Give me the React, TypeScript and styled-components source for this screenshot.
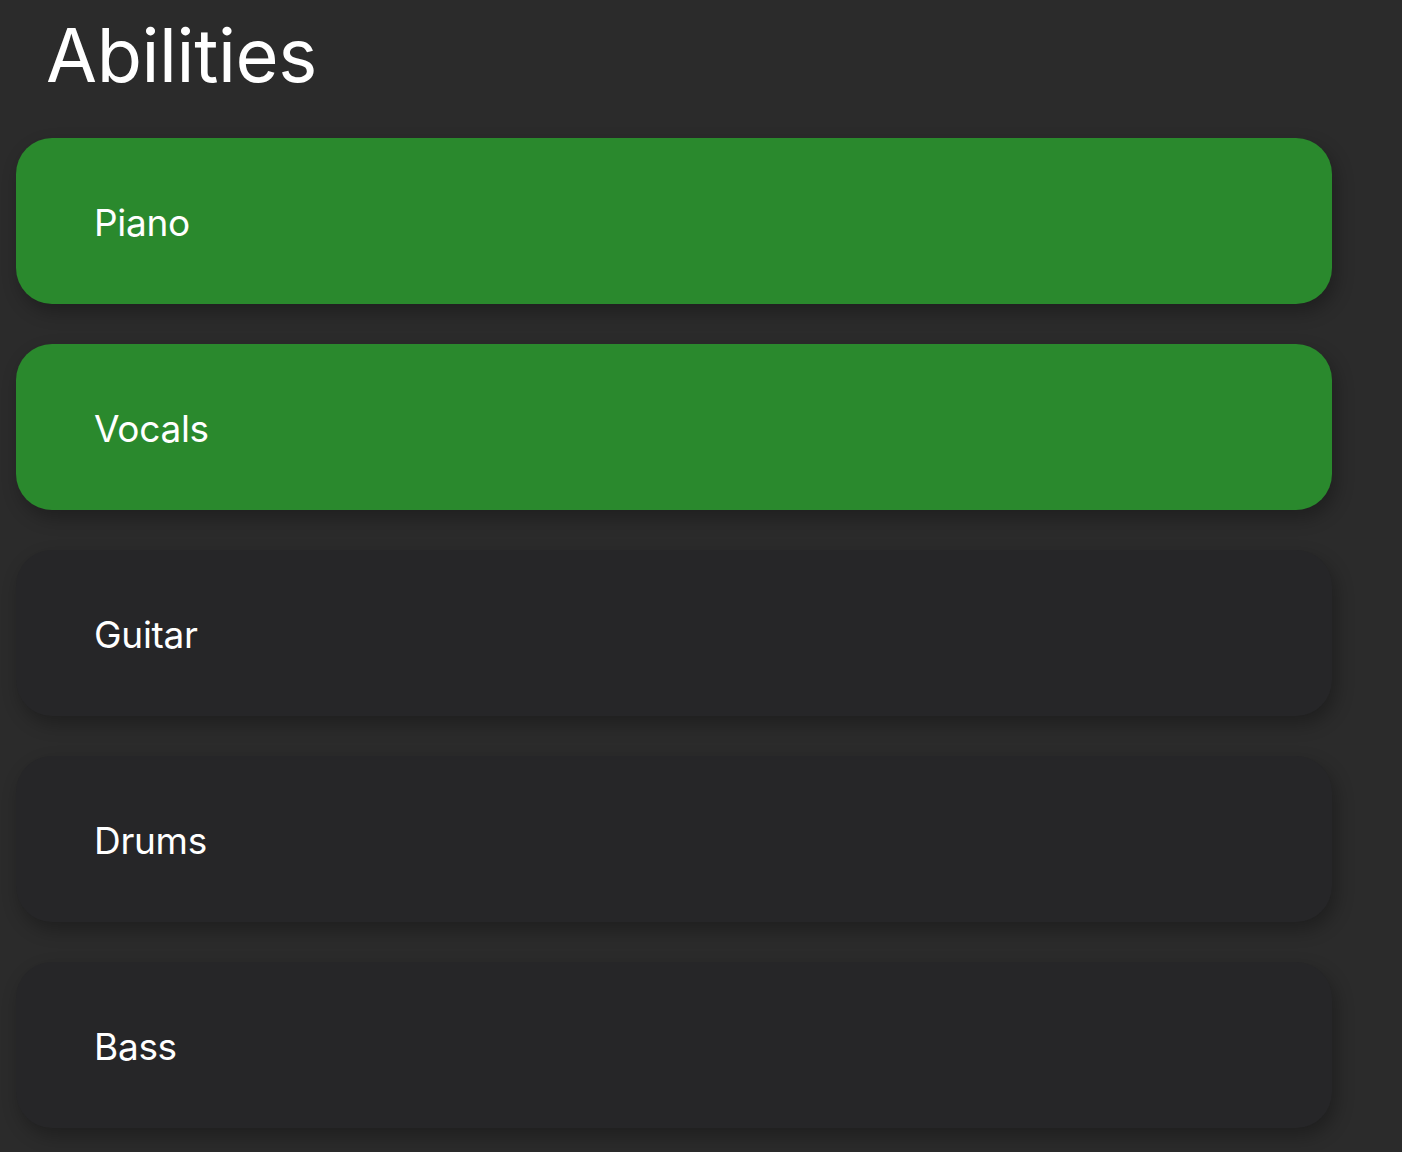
import React from 'react';
import styled, { createGlobalStyle } from 'styled-components';

const abilities = [
  { name: 'Piano', selected: true },
  { name: 'Vocals', selected: true },
  { name: 'Guitar', selected: false },
  { name: 'Drums', selected: false },
  { name: 'Bass', selected: false },
];

export default function App() {
  return (
    <>
      <GlobalStyle />
      <Page>
        <Title>Abilities</Title>
        <List>
          {abilities.map((a) => (
            <AbilityCard key={a.name} $selected={a.selected}>
              {a.name}
            </AbilityCard>
          ))}
        </List>
      </Page>
    </>
  );
}

const GlobalStyle = createGlobalStyle`
  html, body {
    margin: 0;
    padding: 0;
    background: #2b2b2b;
  }
  body {
    font-family: Inter, "Noto Sans", sans-serif;
    color: #ffffff;
  }
`;

const Page = styled.div`
  width: 1402px;
  min-height: 1152px;
  box-sizing: border-box;
  padding: 0 70px 0 16px;
  background: #2b2b2b;
`;

const Title = styled.h1`
  margin: 0;
  padding: 5px 0 0 30px;
  height: 132px;
  box-sizing: border-box;
  font-size: 74px;
  font-weight: 400;
  line-height: 100px;
  letter-spacing: -0.4px;
`;

const List = styled.div`
  display: flex;
  flex-direction: column;
  gap: 40px;
  padding-top: 6px;
`;

const AbilityCard = styled.div<{ $selected: boolean }>`
  height: 166px;
  box-sizing: border-box;
  display: flex;
  align-items: center;
  padding: 2px 0 0 78px;
  border-radius: 36px;
  background: ${({ $selected }) => ($selected ? '#2a892d' : '#262628')};
  box-shadow: 4px 8px 18px rgba(0, 0, 0, 0.28);
  font-size: 37px;
  font-weight: 400;
  letter-spacing: -0.3px;
  color: #ffffff;
`;
